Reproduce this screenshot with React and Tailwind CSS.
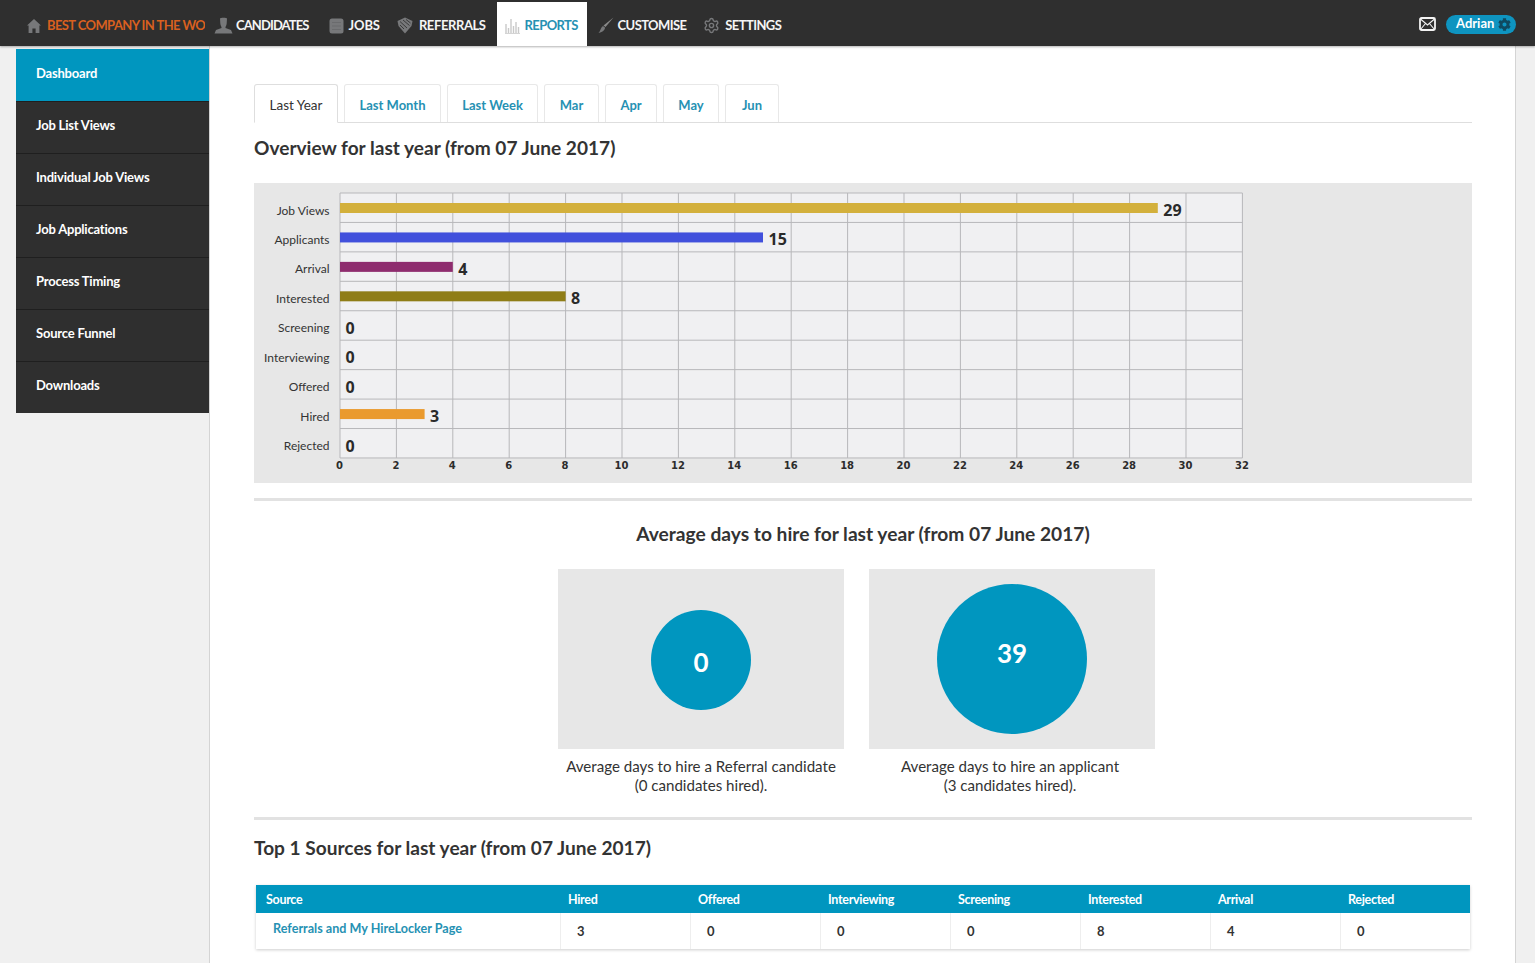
import React from 'react';
import { Settings } from 'lucide-react';
import { FaCog } from 'react-icons/fa';

const HomeIcon = () => (
  <svg width="16" height="16" viewBox="0 0 16 16" className="shrink-0">
    <path d="M8 1 L15 7.5 L13.4 7.5 L13.4 15 L9.6 15 L9.6 10.5 L6.4 10.5 L6.4 15 L2.6 15 L2.6 7.5 L1 7.5 Z" fill="#77787a" />
  </svg>
);

const CandidatesIcon = () => (
  <svg width="19" height="17" viewBox="0 0 19 17" className="shrink-0">
    <path d="M6 1.5 C6 .6 13 .6 13 1.5 L12.7 6.5 C12.5 8.5 11.7 9.6 11.5 10 L11.5 11 L17 13 L18.5 16.5 L.5 16.5 L2 13 L7.5 11 L7.5 10 C7.3 9.6 6.5 8.5 6.3 6.5 Z" fill="#77787a" />
  </svg>
);

const JobsIcon = () => (
  <svg width="15" height="16" viewBox="0 0 15 16" className="shrink-0">
    <rect x="0.5" y="0.5" width="14" height="15" rx="2.5" fill="#77787a" />
    <path d="M3 4.5 H12 M3 8 H12 M3 11.5 H12" stroke="#6a6b6d" strokeWidth="1" />
  </svg>
);

const ReferralsIcon = () => (
  <svg width="16" height="17" viewBox="0 0 16 17" className="shrink-0">
    <path d="M8 .5 L15.5 4 L14.5 9 L8 16.5 L1.5 9 L.5 4 Z" fill="#77787a" />
    <path d="M3 4.5 L10 11 M6 3 L12.5 8.5 M9 2.5 L13.5 6 M3 8 L7 12" stroke="#3a3a3a" strokeWidth="1" />
  </svg>
);

const ReportsIcon = () => (
  <svg width="15" height="16" viewBox="0 0 15 16" className="shrink-0">
    <path d="M1 15 V6 M3.5 15 V10 M6 15 V1 M8.5 15 V8 M11 15 V4 M13.5 15 V9" stroke="#c9c9c9" strokeWidth="1.4" />
    <path d="M0 15.5 H15" stroke="#d4d4d4" strokeWidth="1" />
  </svg>
);

const BrushIcon = () => (
  <svg width="16" height="17" viewBox="0 0 16 17" className="shrink-0">
    <path d="M15.5 .5 L7.5 10 L5.5 8.5 Z" fill="#8a8a8a" />
    <path d="M5 9 L7.2 10.8 C6.5 13.5 4 15.5 .5 16 C2.5 14.5 2.5 10.5 5 9 Z" fill="#77787a" />
  </svg>
);

const MailIcon = () => (
  <svg width="17" height="14" viewBox="0 0 17 14" className="shrink-0">
    <rect x="1" y="1" width="15" height="12" rx="1.5" fill="none" stroke="#f3f3f3" strokeWidth="1.8" />
    <path d="M1.5 2 L8.5 8 L15.5 2 M1.5 12.5 L6.5 6.5 M15.5 12.5 L10.5 6.5" fill="none" stroke="#f3f3f3" strokeWidth="1.1" />
  </svg>
);

const navItems = [
  { label: 'CANDIDATES', icon: <CandidatesIcon />, pad: 'ml-[9px] mr-[20px] tracking-[-0.9px]', gap: 'gap-[3px]' },
  { label: 'JOBS', icon: <JobsIcon />, pad: 'mr-[17px] tracking-[-0.1px]', gap: 'gap-[5px]' },
  { label: 'REFERRALS', icon: <ReferralsIcon />, pad: 'mr-[11px] tracking-[-0.4px]', gap: 'gap-[6px]' },
];

const sideItems = ['Job List Views', 'Individual Job Views', 'Job Applications', 'Process Timing', 'Source Funnel', 'Downloads'];

const tabs = [
  { label: 'Last Month', w: 'w-[97px]' },
  { label: 'Last Week', w: 'w-[91px]' },
  { label: 'Mar', w: 'w-[55px]' },
  { label: 'Apr', w: 'w-[52px]' },
  { label: 'May', w: 'w-[56px]' },
  { label: 'Jun', w: 'w-[54px]' },
];

const rows = [
  { label: 'Job Views', value: 29, color: '#d3b03c' },
  { label: 'Applicants', value: 15, color: '#4150dc' },
  { label: 'Arrival', value: 4, color: '#8e2c6e' },
  { label: 'Interested', value: 8, color: '#8f7d17' },
  { label: 'Screening', value: 0 },
  { label: 'Interviewing', value: 0 },
  { label: 'Offered', value: 0 },
  { label: 'Hired', value: 3, color: '#ea9a2e' },
  { label: 'Rejected', value: 0 },
];

const CHART_X = 340;
const CHART_Y = 193;
const UNIT = 28.2;
const ROW = 29.44;

const Chart = () => (
  <svg viewBox="254 183 1218 300" width="1218" height="300" className="block">
    <rect x={CHART_X} y={CHART_Y} width={UNIT * 32} height={ROW * 9} fill="#f0f0f2" />
    {Array.from({ length: 17 }, (_, i) => (
      <g key={i}>
        <line x1={CHART_X + i * 2 * UNIT} x2={CHART_X + i * 2 * UNIT} y1={CHART_Y} y2={CHART_Y + ROW * 9} stroke="#b7b7ba" strokeWidth="1" />
        <text x={CHART_X + i * 2 * UNIT - 0.5} y="469" textAnchor="middle" fontFamily="DejaVu Sans" fontWeight="700" fontSize="10" fill="#2c2c2c">{i * 2}</text>
      </g>
    ))}
    {Array.from({ length: 10 }, (_, i) => (
      <line key={i} x1={CHART_X} x2={CHART_X + UNIT * 32} y1={CHART_Y + i * ROW} y2={CHART_Y + i * ROW} stroke="#b7b7ba" strokeWidth="1" />
    ))}
    {rows.map((r, i) => {
      const top = CHART_Y + i * ROW;
      const w = r.value * UNIT;
      return (
        <g key={r.label}>
          <text x="329.5" y={top + 21.5} textAnchor="end" fontFamily="Lato" fontSize="12" fill="#333">{r.label}</text>
          {r.color && <rect x={CHART_X} y={top + 10} width={w} height="10" fill={r.color} />}
          <text x={CHART_X + w + 5.5} y={top + 23} fontFamily="Open Sans" fontWeight="700" fontSize="16" fill="#2a2a2a">{r.value}</text>
        </g>
      );
    })}
  </svg>
);

const StatCard = ({ size, text, textClass, captionClass, caption, count }) => (
  <div className="w-[286px]">
    <div className="h-[180px] bg-[#e7e7e7] flex items-center justify-center">
      <div className={`rounded-full bg-[#0096bf] text-white font-bold flex items-center justify-center ${size}`}>
        <span className={textClass}>{text}</span>
      </div>
    </div>
    <p className={`mt-[8px] text-center text-[15.1px] leading-[19px] text-[#333] ${captionClass}`}>
      {caption}
      <br />
      {count}
    </p>
  </div>
);

const columns = [
  { label: 'Hired', value: 3 },
  { label: 'Offered', value: 0 },
  { label: 'Interviewing', value: 0 },
  { label: 'Screening', value: 0 },
  { label: 'Interested', value: 8 },
  { label: 'Arrival', value: 4 },
  { label: 'Rejected', value: 0 },
];

export default function App() {
  return (
    <div className="h-[963px] overflow-hidden bg-[#f0f0f0] font-['Lato',sans-serif] text-[#333]">
      {/* top bar */}
      <header className="relative z-10 h-[46px] bg-[#2f2f2f] shadow-[0_1px_2px_rgba(0,0,0,0.3)] flex items-center pt-[5px] pl-[26px] pr-[19px] text-[13px] font-bold tracking-[-0.6px] text-[#f5f5f5]">
        <HomeIcon />
        <span className="ml-[5px] w-[158px] overflow-hidden whitespace-nowrap text-[#d9601f]">BEST COMPANY IN THE WORLD</span>
        {navItems.map((item) => (
          <a key={item.label} className={`flex items-center ${item.gap} ${item.pad}`}>
            {item.icon}
            {item.label}
          </a>
        ))}
        <a className="h-[44px] w-[90px] self-start -mt-[3px] bg-white flex items-center gap-[5px] pl-[8px] pt-[4px] text-[#2691b3]">
          <ReportsIcon />
          REPORTS
        </a>
        <a className="ml-[11px] flex items-center gap-[4px]">
          <BrushIcon />
          CUSTOMISE
        </a>
        <a className="ml-[17px] flex items-center gap-[5px]">
          <Settings size={17} color="#77787a" strokeWidth={2} />
          SETTINGS
        </a>
        <div className="ml-auto -mt-[3px] flex items-center gap-[10px]">
          <MailIcon />
          <div className="w-[70px] h-[19px] rounded-full bg-[#0e94c0] flex items-center pl-[10px] gap-[4px] text-white text-[13px] tracking-normal">
            Adrian
            <FaCog size={13} color="#0f4a60" />
          </div>
        </div>
      </header>

      <div className="flex h-[917px]">
        {/* sidebar */}
        <nav className="ml-[16px] w-[193px] shrink-0 pt-[3px] text-[13px] font-bold tracking-[-0.2px] text-white">
          <a className="h-[52px] bg-[#0096bf] flex items-center pl-[20px] pb-[3px]">Dashboard</a>
          {sideItems.map((item) => (
            <a key={item} className="h-[52px] bg-[#2f2f2f] border-t border-[#1f1f1f] flex items-center pl-[20px] pb-[3px]">{item}</a>
          ))}
        </nav>

        {/* main panel */}
        <main className="w-[1307px] shrink-0 bg-white border-x border-[#d4d4d4] pl-[44px] pr-[43px] pt-[38px]">
          <div className="flex gap-[6px] h-[39px] border-b border-[#dedede]">
            <button className="w-[84px] h-[39px] pt-[3px] bg-white border border-[#dedede] border-b-white rounded-t-[3px] text-[13.5px] text-[#333]">Last Year</button>
            {tabs.map((t) => (
              <button key={t.label} className={`${t.w} h-[38px] pt-[4px] border border-[#e8e8e8] border-b-0 rounded-t-[3px] text-[13px] font-bold text-[#2691b3]`}>{t.label}</button>
            ))}
          </div>

          <h2 className="mt-[11px] text-[19.1px] leading-[28px] font-bold text-[#333]">Overview for last year (from 07 June 2017)</h2>

          <div className="mt-[21px] h-[300px] bg-[#e7e7e7]">
            <Chart />
          </div>

          <hr className="mt-[15px] border-t-[3px] border-[#e2e2e2]" />

          <h2 className="mt-[19px] text-center text-[19.2px] leading-[28px] font-bold text-[#333]">Average days to hire for last year (from 07 June 2017)</h2>

          <div className="mt-[21px] ml-[304px] flex gap-[25px]">
            <StatCard size="w-[100px] h-[100px] mt-[2px]" text="0" textClass="text-[26px] mt-[5px]" captionClass="" caption="Average days to hire a Referral candidate" count="(0 candidates hired)." />
            <StatCard size="w-[150px] h-[150px]" text="39" textClass="text-[26px] mb-[12px]" captionClass="pr-[4px]" caption="Average days to hire an applicant" count="(3 candidates hired)." />
          </div>

          <hr className="mt-[22px] border-t-[3px] border-[#e2e2e2]" />

          <h2 className="mt-[14px] text-[19.1px] leading-[28px] font-bold text-[#333]">Top 1 Sources for last year (from 07 June 2017)</h2>

          <div className="mt-[23px] mx-[2px] shadow-[0_1px_3px_rgba(0,0,0,0.2)]">
            <div className="grid grid-cols-[304px_repeat(7,130px)] h-[28px] pt-[3px] bg-[#0096bf] text-white text-[12.5px] font-bold tracking-[-0.3px] items-center">
              <div className="pl-[10px]">Source</div>
              {columns.map((c) => (
                <div key={c.label} className="pl-[8px]">{c.label}</div>
              ))}
            </div>
            <div className="grid grid-cols-[304px_repeat(7,130px)] h-[36px] bg-white">
              <a className="pl-[17px] pt-[7px] text-[12.6px] font-bold text-[#2691b3]">Referrals and My HireLocker Page</a>
              {columns.map((c) => (
                <div key={c.label} className="border-l border-[#eeeeee] pl-[16px] pt-[9px] text-[13px] font-bold text-[#333]">{c.value}</div>
              ))}
            </div>
          </div>
        </main>
      </div>
    </div>
  );
}
